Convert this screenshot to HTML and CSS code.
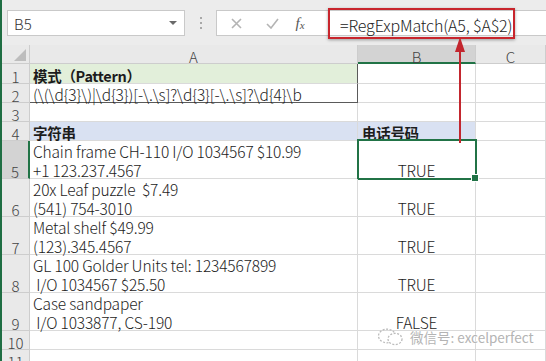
FILE: index.html
```html
<!DOCTYPE html>
<html lang="zh">
<head>
    <meta charset="UTF-8">
    <meta name="viewport" content="width=device-width, initial-scale=1.0">
    <title>RegExpMatch</title>
    <link rel="stylesheet" href="styles.css">
</head>
<body>
    <div class="window">
        <div class="formula-bar">
            <div class="name-box">
                <span>B5</span>
                <span class="caret"></span>
            </div>
            <div class="grip"><i></i><i></i><i></i></div>
            <div class="input">
                <span class="btn cancel">
                    <svg width="11" height="11" viewBox="0 0 11 11"><path d="M1 1L10 10M10 1L1 10" stroke="#b4b4b4" stroke-width="1.6" fill="none"/></svg>
                </span>
                <span class="btn enter">
                    <svg width="13" height="11" viewBox="0 0 13 11"><path d="M1 6L5 10L12 1" stroke="#b4b4b4" stroke-width="1.6" fill="none"/></svg>
                </span>
                <span class="btn fx"><i>f</i><i class="x">x</i></span>
                <div class="formula">=RegExpMatch(A5, $A$2)</div>
            </div>
        </div>

        <div class="sheet">
            <div class="h corner">
                <svg width="12" height="12" viewBox="0 0 12 12"><path d="M12 0V12H0Z" fill="#bdbdbd"/></svg>
            </div>
            <div class="h">A</div>
            <div class="h sel-col">B</div>
            <div class="h">C</div>

            <div class="h rh"><span>1</span></div>
            <div class="c green boxed"><b>模式（Pattern）</b></div>
            <div class="c"></div>
            <div class="c"></div>

            <div class="h rh"><span>2</span></div>
            <div class="c boxed boxed-bottom"><span>(\(\d{3}\)|\d{3})[-\.\s]?\d{3}[-\.\s]?\d{4}\b</span></div>
            <div class="c"></div>
            <div class="c"></div>

            <div class="h rh"><span>3</span></div>
            <div class="c"></div>
            <div class="c"></div>
            <div class="c"></div>

            <div class="h rh"><span>4</span></div>
            <div class="c blue"><b>字符串</b></div>
            <div class="c blue b-head"><b>电话号码</b></div>
            <div class="c"></div>

            <div class="h rh sel-row"><span>5</span></div>
            <div class="c"><span>Chain frame CH-110 I/O 1034567 $10.99</span><span>+1 123.237.4567</span></div>
            <div class="c val active"><span>TRUE</span></div>
            <div class="c"></div>

            <div class="h rh"><span>6</span></div>
            <div class="c"><span>20x Leaf puzzle  $7.49</span><span>(541) 754-3010</span></div>
            <div class="c val"><span>TRUE</span></div>
            <div class="c"></div>

            <div class="h rh"><span>7</span></div>
            <div class="c"><span>Metal shelf $49.99</span><span>(123).345.4567</span></div>
            <div class="c val"><span>TRUE</span></div>
            <div class="c"></div>

            <div class="h rh"><span>8</span></div>
            <div class="c"><span>GL 100 Golder Units tel: 1234567899</span><span> I/O 1034567 $25.50</span></div>
            <div class="c val"><span>TRUE</span></div>
            <div class="c"></div>

            <div class="h rh"><span>9</span></div>
            <div class="c"><span>Case sandpaper</span><span> I/O 1033877, CS-190</span></div>
            <div class="c val"><span>FALSE</span></div>
            <div class="c"></div>

            <div class="h rh"><span>10</span></div>
            <div class="c"></div>
            <div class="c"></div>
            <div class="c"></div>

            <div class="h rh"><span>11</span></div>
            <div class="c"></div>
            <div class="c"></div>
            <div class="c"></div>
        </div>

        <svg class="arrow" width="14" height="106" viewBox="0 0 14 106">
            <path d="M7 12V106" stroke="#c3262e" stroke-width="2"/>
            <path d="M7 0L2 15H12Z" fill="#c3262e"/>
        </svg>

        <div class="watermark">
            <svg width="27" height="18" viewBox="0 0 27 18">
                <ellipse cx="10" cy="8" rx="8.5" ry="6.8" fill="none" stroke="#bcbcbc" stroke-width="1.3" stroke-dasharray="2 1.5"/>
                <ellipse cx="18" cy="11" rx="7" ry="5.6" fill="#fff" stroke="#bcbcbc" stroke-width="1.3" stroke-dasharray="2 1.5"/>
            </svg>
            <span>微信号: excelperfect</span>
        </div>
    </div>
</body>
</html>
```

FILE: styles.css
```css
* {
    box-sizing: border-box;
}

body {
    margin: 0;
    background: #fff;
    font-family: "Noto Sans CJK SC", "Liberation Sans", sans-serif;
}

.window {
    position: relative;
    width: 546px;
    height: 361px;
    overflow: hidden;
    border-left: 2px solid #1f6e43;
    background: #fff;
}

/* formula bar */
.formula-bar {
    height: 45px;
    padding-top: 10px;
    background: #ececec;
    display: flex;
    align-items: flex-start;
}

.name-box {
    width: 178px;
    height: 26px;
    margin-left: 5px;
    padding: 0 7px 0 6px;
    background: #fff;
    border: 1px solid #c9c9c9;
    display: flex;
    align-items: center;
    justify-content: space-between;
    font-size: 15px;
    font-weight: 300;
    color: #333;
}

.caret {
    width: 0;
    height: 0;
    border-left: 4px solid transparent;
    border-right: 4px solid transparent;
    border-top: 4px solid #6a6a6a;
}

.grip {
    width: 31px;
    padding-top: 7px;
    display: flex;
    flex-direction: column;
    align-items: center;
    gap: 3px;
}

.grip i {
    width: 2px;
    height: 2px;
    background: #a8a8a8;
}

.input {
    flex: 1;
    height: 26px;
    background: #fff;
    border: 1px solid #c9c9c9;
    border-right: none;
    display: flex;
    align-items: center;
}

.btn {
    display: flex;
    align-items: center;
    justify-content: center;
}

.cancel { width: 38px; }
.enter { width: 34px; }

.fx {
    width: 22px;
    font-family: "Liberation Serif", serif;
    color: #555;
    font-size: 15px;
}

.fx .x {
    font-size: 11px;
    margin-top: 4px;
}

.formula {
    width: 187px;
    height: 31px;
    margin-left: 17px;
    padding: 3px 0 0 10px;
    border: 2px solid #c8252c;
    box-shadow: 0 1px 3px rgba(0, 0, 0, 0.35);
    display: flex;
    align-items: center;
    font-size: 16px;
    font-weight: 300;
    letter-spacing: -0.15px;
    color: #222;
    white-space: nowrap;
}

/* grid */
.sheet {
    display: grid;
    grid-template-columns: 28px 328px 118px 1fr;
    grid-template-rows: 19px 20px 19px 19px 19px repeat(5, 38px) 19px 19px;
}

.h {
    background: #e9e9e9;
    border-right: 1px solid #cdcdcd;
    border-bottom: 1px solid #cdcdcd;
    color: #444;
    font-size: 15px;
    font-weight: 300;
    line-height: 18px;
    padding-top: 3px;
    text-align: center;
}

.corner {
    display: flex;
    align-items: flex-end;
    justify-content: flex-end;
    padding: 0 3px 2px 0;
}

.rh {
    display: flex;
    align-items: flex-end;
    justify-content: center;
    padding-top: 0;
}

.rh span {
    margin-bottom: -3px;
}

.sel-col {
    background: #d3d3d3;
    border-bottom: 2px solid #217346;
    line-height: 17px;
}

.sel-row {
    background: #d3d3d3;
    border-right: 2px solid #217346;
}

.c {
    position: relative;
    border-right: 1px solid #dadada;
    border-bottom: 1px solid #dadada;
    padding: 0 3px;
    display: flex;
    flex-direction: column;
    justify-content: flex-end;
    font-size: 15.5px;
    font-weight: 300;
    letter-spacing: -0.15px;
    line-height: 19px;
    color: #1c1c1c;
    white-space: pre;
}

.c > :last-child {
    margin-bottom: -2px;
}

.c b {
    font-size: 14.5px;
    font-weight: bold;
    letter-spacing: -0.3px;
}

.green { background: #e2efda; }
.blue { background: #d9e1f2; }

.boxed { border-right-color: #5a5a5a; }
.boxed-bottom { border-bottom-color: #5a5a5a; }

.b-head {
    padding-left: 4px;
}

.val {
    text-align: center;
}

.active::after {
    content: "";
    position: absolute;
    top: -2px;
    left: -1px;
    right: -2px;
    bottom: -2px;
    border: 2px solid #217346;
}

.active::before {
    content: "";
    position: absolute;
    right: -4px;
    bottom: -4px;
    width: 6px;
    height: 6px;
    background: #217346;
    border: 1px solid #fff;
    z-index: 1;
}

/* annotation */
.arrow {
    position: absolute;
    left: 451px;
    top: 37px;
}

.watermark {
    position: absolute;
    left: 375px;
    top: 327px;
    display: flex;
    align-items: center;
    gap: 6px;
    font-size: 13.5px;
    color: #b4b4b4;
    text-shadow: 0 0 2px #fff, 0 0 1px #fff;
}
```
